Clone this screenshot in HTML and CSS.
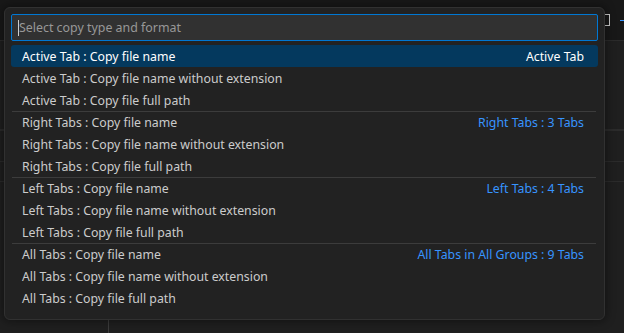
FILE: index.html
```html
<!DOCTYPE html>
<html lang="en">
  <head>
    <meta charset="UTF-8" />
    <title>Copy Tabs</title>
    <link rel="stylesheet" href="styles.css">
  </head>
  <body>
    <div class="workbench">
      <div class="tabbar">
        <span class="tab-actions">
          <span class="split-icon"></span>
          <span class="more-icon"></span>
        </span>
      </div>
      <div class="editor">
        <div class="editor-line line-a"></div>
        <div class="editor-line line-b"></div>
        <div class="editor-line line-c"></div>
        <div class="panel-divider"></div>
      </div>
    </div>

    <div class="quick-input">
      <div class="input-box">
        <span class="caret"></span>
        <span class="placeholder">Select copy type and format</span>
      </div>
      <div class="pick-list">
        <div class="pick selected">
          <span class="label">Active Tab : Copy file name</span>
          <span class="detail">Active Tab</span>
        </div>
        <div class="pick"><span class="label">Active Tab : Copy file name without extension</span></div>
        <div class="pick"><span class="label">Active Tab : Copy file full path</span></div>

        <div class="pick sep">
          <span class="label">Right Tabs : Copy file name</span>
          <span class="detail">Right Tabs : 3 Tabs</span>
        </div>
        <div class="pick"><span class="label">Right Tabs : Copy file name without extension</span></div>
        <div class="pick"><span class="label">Right Tabs : Copy file full path</span></div>

        <div class="pick sep">
          <span class="label">Left Tabs : Copy file name</span>
          <span class="detail">Left Tabs : 4 Tabs</span>
        </div>
        <div class="pick"><span class="label">Left Tabs : Copy file name without extension</span></div>
        <div class="pick"><span class="label">Left Tabs : Copy file full path</span></div>

        <div class="pick sep">
          <span class="label">All Tabs : Copy file name</span>
          <span class="detail">All Tabs in All Groups : 9 Tabs</span>
        </div>
        <div class="pick"><span class="label">All Tabs : Copy file name without extension</span></div>
        <div class="pick"><span class="label">All Tabs : Copy file full path</span></div>
      </div>
    </div>
  </body>
</html>
```

FILE: styles.css
```css
body {
  margin: 0;
  width: 624px;
  height: 333px;
  overflow: hidden;
  background-color: #1f1f1f;
  font-family: "Noto Sans", "Open Sans", sans-serif;
  font-size: 12.3px;
  color: #cccccc;
  position: relative;
}

.workbench {
  display: flex;
  flex-direction: column;
  height: 100%;
}

.tabbar {
  height: 40px;
  background-color: #181818;
  border-bottom: 1px solid #2b2b2b;
  display: flex;
  justify-content: flex-end;
  align-items: center;
}

.tab-actions {
  display: flex;
  align-items: center;
  gap: 10px;
}

.split-icon {
  width: 4px;
  height: 10px;
  border: 1px solid #cccccc;
  border-left: none;
}

.more-icon {
  width: 4px;
  height: 1px;
  background-color: #3794ff;
}

.editor {
  flex: 1;
  position: relative;
}

.editor-line {
  height: 2px;
  background-color: #2b2b2b;
}

.editor-line.line-a {
  margin-top: 88px;
}

.editor-line.line-b {
  margin-top: 30px;
  height: 1px;
}

.editor-line.line-c {
  margin-top: 19px;
  height: 1px;
}

.panel-divider {
  position: absolute;
  left: 108px;
  bottom: 0;
  width: 1px;
  height: 30px;
  background-color: #3c3c3c;
}

/* quick pick overlay */
.quick-input {
  position: absolute;
  left: 4px;
  top: 7px;
  width: 587px;
  height: 300px;
  padding: 6px 6px 5px 6px;
  background-color: #222222;
  border: 1px solid #313131;
  border-radius: 6px;
  box-shadow: 0 0 8px 2px rgba(0, 0, 0, 0.36);
}

.input-box {
  height: 25px;
  border: 1px solid #0078d4;
  background-color: #313131;
  display: flex;
  align-items: center;
  padding-left: 6px;
  border-radius: 2px;
  font-size: 12.4px;
}

.caret {
  width: 1px;
  height: 16px;
  background-color: #cccccc;
}

.placeholder {
  color: #989898;
}

.pick-list {
  margin-top: 4px;
}

.pick {
  height: 22px;
  display: flex;
  align-items: center;
  padding: 0 14px 0 11px;
  border-radius: 3px;
  box-sizing: border-box;
}

.pick.sep {
  border-top: 1px solid #3c3c3c;
  border-radius: 0;
  margin: 0 2px 0 1px;
  padding-left: 10px;
  padding-right: 12px;
}

.pick.selected {
  background-color: #04395e;
  color: #ffffff;
}

.detail {
  margin-left: auto;
  color: #3794ff;
}

.pick.selected .detail {
  color: #ffffff;
}
```
